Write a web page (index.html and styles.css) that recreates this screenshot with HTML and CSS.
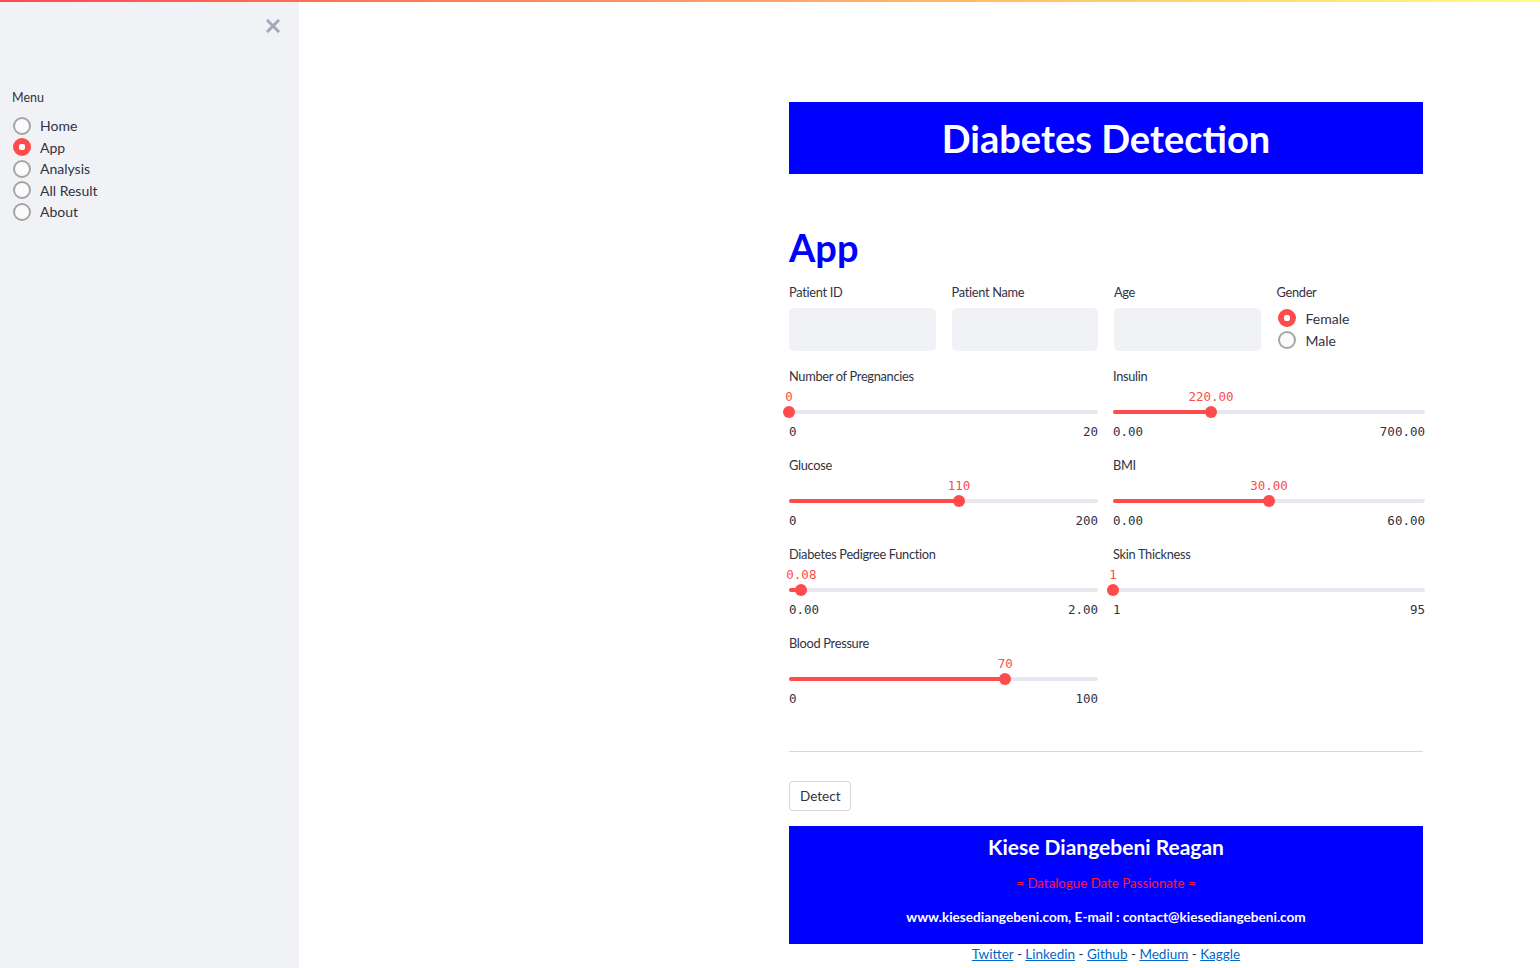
FILE: index.html
```html
<!DOCTYPE html>
<html lang="en">
<head>
<meta charset="utf-8">
<title>Diabetes Detection</title>
<link rel="stylesheet" href="styles.css">
</head>
<body>
<div class="decoration"></div>
<div class="app">
  <aside class="sidebar">
    <div class="close-row">
      <svg class="close" width="14" height="14" viewBox="0 0 14 14"><path d="M2 2 L12 12 M12 2 L2 12" stroke="#a3a8b4" stroke-width="3" stroke-linecap="square"/></svg>
    </div>
    <div class="menu-label">Menu</div>
    <div class="radio-group">
      <div class="radio"><span class="dot"></span><span>Home</span></div>
      <div class="radio checked"><span class="dot"></span><span>App</span></div>
      <div class="radio"><span class="dot"></span><span>Analysis</span></div>
      <div class="radio"><span class="dot"></span><span>All Result</span></div>
      <div class="radio"><span class="dot"></span><span>About</span></div>
    </div>
  </aside>
  <main class="main">
    <div class="block">
      <div class="banner"><h1>Diabetes Detection</h1></div>
      <h1 class="page-title">App</h1>

      <div class="row4">
        <div class="field"><div class="label">Patient ID</div><div class="input"></div></div>
        <div class="field"><div class="label">Patient Name</div><div class="input"></div></div>
        <div class="field"><div class="label">Age</div><div class="input"></div></div>
        <div class="field">
          <div class="label">Gender</div>
          <div class="radio-group gender">
            <div class="radio checked"><span class="dot"></span><span>Female</span></div>
            <div class="radio"><span class="dot"></span><span>Male</span></div>
          </div>
        </div>
      </div>

      <div class="sliders">
        <div class="slider">
          <div class="label">Number of Pregnancies</div>
          <div class="value-row"><span class="value" style="left:0%">0</span></div>
          <div class="track"><div class="fill" style="width:0%"></div><div class="thumb" style="left:0%"></div></div>
          <div class="minmax"><span>0</span><span>20</span></div>
        </div>
        <div class="slider">
          <div class="label">Insulin</div>
          <div class="value-row"><span class="value" style="left:31.43%">220.00</span></div>
          <div class="track"><div class="fill" style="width:31.43%"></div><div class="thumb" style="left:31.43%"></div></div>
          <div class="minmax"><span>0.00</span><span>700.00</span></div>
        </div>
        <div class="slider">
          <div class="label">Glucose</div>
          <div class="value-row"><span class="value" style="left:55%">110</span></div>
          <div class="track"><div class="fill" style="width:55%"></div><div class="thumb" style="left:55%"></div></div>
          <div class="minmax"><span>0</span><span>200</span></div>
        </div>
        <div class="slider">
          <div class="label">BMI</div>
          <div class="value-row"><span class="value" style="left:50%">30.00</span></div>
          <div class="track"><div class="fill" style="width:50%"></div><div class="thumb" style="left:50%"></div></div>
          <div class="minmax"><span>0.00</span><span>60.00</span></div>
        </div>
        <div class="slider">
          <div class="label">Diabetes Pedigree Function</div>
          <div class="value-row"><span class="value" style="left:4%">0.08</span></div>
          <div class="track"><div class="fill" style="width:4%"></div><div class="thumb" style="left:4%"></div></div>
          <div class="minmax"><span>0.00</span><span>2.00</span></div>
        </div>
        <div class="slider">
          <div class="label">Skin Thickness</div>
          <div class="value-row"><span class="value" style="left:0%">1</span></div>
          <div class="track"><div class="fill" style="width:0%"></div><div class="thumb" style="left:0%"></div></div>
          <div class="minmax"><span>1</span><span>95</span></div>
        </div>
        <div class="slider">
          <div class="label">Blood Pressure</div>
          <div class="value-row"><span class="value" style="left:70%">70</span></div>
          <div class="track"><div class="fill" style="width:70%"></div><div class="thumb" style="left:70%"></div></div>
          <div class="minmax"><span>0</span><span>100</span></div>
        </div>
      </div>

      <hr class="divider">

      <button class="btn">Detect</button>

      <div class="footer-box">
        <div class="name">Kiese Diangebeni Reagan</div>
        <div class="tagline">= Datalogue Date Passionate =</div>
        <div class="contact">www.kiesediangebeni.com, E-mail : contact@kiesediangebeni.com</div>
      </div>
      <div class="links">
        <a href="#">Twitter</a> - <a href="#">Linkedin</a> - <a href="#">Github</a> - <a href="#">Medium</a> - <a href="#">Kaggle</a>
      </div>
    </div>
  </main>
</div>
</body>
</html>
```

FILE: styles.css
```css
* { box-sizing: border-box; }
html, body {
  margin: 0;
  padding: 0;
  height: 100%;
  overflow: hidden;
  background: #ffffff;
  font-family: Lato, "Noto Sans", sans-serif;
  color: rgb(49, 51, 63);
}
.decoration {
  position: absolute;
  top: 0; left: 0; right: 0;
  height: 2px;
  background: linear-gradient(90deg, rgb(255, 75, 75), rgb(255, 253, 128));
  z-index: 5;
}
.app {
  display: flex;
  height: 968px;
}
.sidebar {
  width: 299px;
  flex: none;
  background: #f0f2f6;
  padding: 19px 12px 0 12px;
}
.close-row {
  display: flex;
  justify-content: flex-end;
  padding-right: 7px;
  height: 14px;
}
.menu-label {
  margin-top: 57px;
  font-size: 12.5px;
  line-height: 16px;
}
.radio-group {
  margin-top: 9px;
  display: flex;
  flex-direction: column;
}
.radio {
  display: flex;
  align-items: center;
  height: 21.5px;
  font-size: 14px;
  gap: 9px;
  padding-left: 1px;
}
.dot {
  width: 18px;
  height: 18px;
  border-radius: 50%;
  border: 2px solid #a6a6a6;
  background: #fafafa;
  flex: none;
  display: flex;
  align-items: center;
  justify-content: center;
}
.radio.checked .dot {
  border-color: #ff4b4b;
  background: #ff4b4b;
}
.radio.checked .dot::after {
  content: "";
  width: 6px;
  height: 6px;
  border-radius: 2px;
  background: #ffffff;
}
.main {
  flex: 1;
  padding-left: 490px;
}
.block {
  width: 634px;
  padding-top: 102px;
}
.banner {
  background: #0000ff;
  height: 72px;
  display: flex;
  align-items: center;
  justify-content: center;
}
.banner h1 {
  margin: 0;
  color: #ffffff;
  font-size: 38px;
  font-weight: 700;
  line-height: 1;
}
.page-title {
  margin: 50px 0 0 0;
  color: #0000ff;
  font-size: 38px;
  font-weight: 700;
  line-height: 47px;
}
.row4 {
  margin-top: 11px;
  display: grid;
  grid-template-columns: repeat(4, 1fr);
  gap: 16px;
}
.label {
  font-size: 12.8px;
  letter-spacing: -0.3px;
  line-height: 20px;
  height: 20px;
}
.input {
  margin-top: 6px;
  height: 43px;
  background: #f0f2f6;
  border-radius: 5px;
}
.gender {
  margin-top: 5px;
  padding-left: 1px;
}
.gender .radio {
  height: 22px;
  gap: 10px;
}
.gender .dot {
  margin-left: -1px;
}
.sliders {
  margin-top: 15px;
  display: grid;
  grid-template-columns: 309px 312px;
  column-gap: 15px;
  row-gap: 15px;
}
.slider {
  height: 74px;
}
.value-row {
  position: relative;
  height: 20px;
  font-family: "DejaVu Sans Mono", monospace;
  font-size: 12.5px;
  color: #ff4b4b;
}
.value {
  position: absolute;
  top: 3px;
  transform: translateX(-50%);
  white-space: nowrap;
}
.track {
  position: relative;
  margin-top: 4px;
  height: 4px;
  border-radius: 2px;
  background: #e6e8ef;
}
.fill {
  height: 4px;
  border-radius: 2px;
  background: #ff4b4b;
}
.thumb {
  position: absolute;
  top: -4px;
  width: 12px;
  height: 12px;
  margin-left: -6px;
  border-radius: 50%;
  background: #ff4b4b;
}
.minmax {
  margin-top: 10px;
  display: flex;
  justify-content: space-between;
  font-family: "DejaVu Sans Mono", monospace;
  font-size: 12.5px;
  line-height: 16px;
  color: rgb(49, 51, 63);
}
.divider {
  margin: 44px 0 0 0;
  border: none;
  border-top: 1px solid #d8d8d8;
  height: 0;
}
.btn {
  display: block;
  margin-top: 29px;
  height: 30px;
  padding: 0 10px;
  border: 1px solid rgba(49, 51, 63, 0.2);
  border-radius: 4px;
  background: #ffffff;
  font-family: Lato, "Noto Sans", sans-serif;
  font-size: 13.5px;
  color: rgb(49, 51, 63);
}
.footer-box {
  margin-top: 15px;
  height: 118px;
  background: #0000ff;
  text-align: center;
  padding-top: 7px;
}
.name {
  color: #ffffff;
  font-size: 21px;
  font-weight: 700;
  line-height: 28px;
}
.tagline {
  margin-top: 12px;
  color: #ff1a3c;
  font-size: 13.3px;
  line-height: 20px;
}
.contact {
  margin-top: 14px;
  color: #ffffff;
  font-size: 13.6px;
  font-weight: 700;
  line-height: 20px;
}
.links {
  text-align: center;
  font-size: 13.5px;
  line-height: 20px;
}
.links a {
  color: #0068c9;
}
```
